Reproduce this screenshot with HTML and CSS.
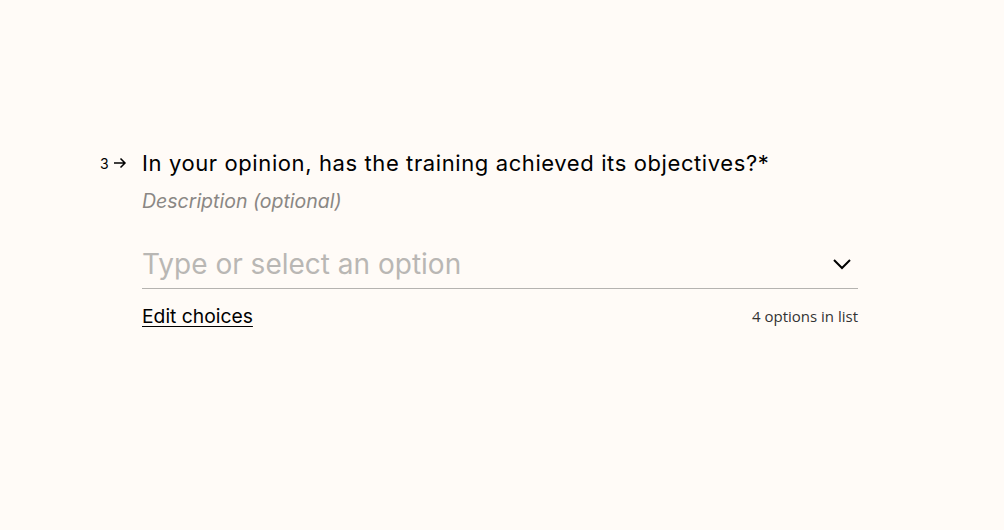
FILE: index.html
```html
<!DOCTYPE html>
<html lang="en">
<head>
<meta charset="utf-8">
<link rel="stylesheet" href="styles.css">
</head>
<body>
<main class="page">
  <section class="question">
    <div class="counter">
      <span class="num">3</span>
      <svg class="arrow" width="14" height="12" viewBox="0 0 14 12"><path d="M1 6h11M7.5 1.5 12 6l-4.5 4.5" fill="none" stroke="#000" stroke-width="1.5"/></svg>
    </div>
    <div class="body">
      <h1 class="title">In your opinion, has the training achieved its objectives?*</h1>
      <p class="desc">Description (optional)</p>
      <div class="field">
        <span class="placeholder">Type or select an option</span>
        <svg class="chev" width="20" height="12" viewBox="0 0 20 12"><path d="M2 2l8 8 8-8" fill="none" stroke="#000" stroke-width="2"/></svg>
      </div>
      <div class="meta">
        <a class="edit" href="#">Edit choices</a>
        <span class="count">4 options in list</span>
      </div>
    </div>
  </section>
</main>
</body>
</html>
```
FILE: styles.css
```css
html, body {
  margin: 0;
  padding: 0;
  background: #fffbf7;
}
body {
  font-family: "Inter", "Liberation Sans", sans-serif;
  color: #000;
  width: 1004px;
  height: 530px;
}
.page {
  padding-top: 148px;
}
.question {
  display: flex;
  margin-left: 100px;
  width: 758px;
}
.counter {
  width: 42px;
  display: flex;
  align-items: center;
  gap: 4px;
  height: 30px;
}
.num {
  font-size: 14px;
}
.body {
  flex: 1;
}
.title {
  margin: 0;
  font-size: 22px;
  letter-spacing: 0.6px;
  font-weight: 400;
  line-height: 30px;
}
.desc {
  margin: 10px 0 0;
  font-size: 19.5px;
  font-style: italic;
  color: #8a8784;
  line-height: 26px;
}
.field {
  margin-top: 26px;
  display: flex;
  align-items: center;
  justify-content: space-between;
  border-bottom: 1px solid #b5b3b0;
  height: 48px;
}
.placeholder {
  font-size: 28px;
  color: #b9b7b4;
}
.chev {
  margin-right: 6px;
}
.meta {
  display: flex;
  justify-content: space-between;
  align-items: center;
  margin-top: 15px;
}
.edit {
  color: #000;
  font-size: 19.3px;
  text-decoration: underline;
  text-underline-offset: 3px;
}
.count {
  font-family: "Open Sans", sans-serif;
  font-size: 15px;
  color: #333;
}
```
